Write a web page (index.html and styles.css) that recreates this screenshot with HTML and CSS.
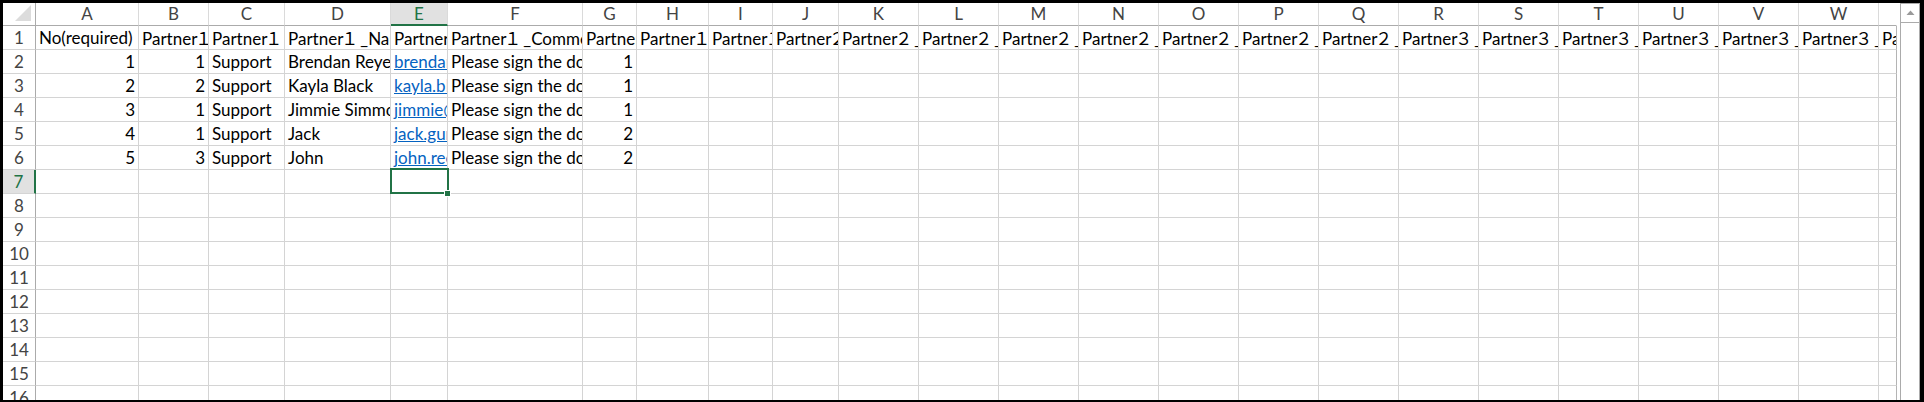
FILE: index.html
```html
<!DOCTYPE html>
<html lang="en">
<head>
<meta charset="utf-8">
<title>Sheet</title>
<link rel="stylesheet" href="styles.css">
</head>
<body>
<div class="window">
  <div class="sheet">
    <div class="row head">
      <div class="corner"><svg width="33" height="23" viewBox="0 0 33 23"><polygon points="28,2 28,18 12,18" fill="#dcdcdc"/></svg></div>
      <div>A</div><div>B</div><div>C</div><div>D</div><div class="on">E</div><div>F</div><div>G</div><div>H</div><div>I</div><div>J</div><div>K</div><div>L</div><div>M</div><div>N</div><div>O</div><div>P</div><div>Q</div><div>R</div><div>S</div><div>T</div><div>U</div><div>V</div><div>W</div><div class="x"></div>
    </div>
    <div class="row">
      <div class="rh">1</div>
      <div>No(required)</div><div>Partner<span class="fw">１</span>_Order</div><div>Partner<span class="fw">１</span>_Type</div><div>Partner<span class="fw">１</span>_Name</div><div>Partner<span class="fw">１</span>_Email</div><div>Partner<span class="fw">１</span>_Comment</div><div>Partner<span class="fw">１</span>_Language</div><div>Partner<span class="fw">１</span>_Company</div><div>Partner<span class="fw">１</span>_Phone</div>
      <div>Partner<span class="fw">２</span>_Order</div><div>Partner<span class="fw">２</span>_Type</div><div>Partner<span class="fw">２</span>_Name</div><div>Partner<span class="fw">２</span>_Email</div><div>Partner<span class="fw">２</span>_Comment</div><div>Partner<span class="fw">２</span>_Language</div><div>Partner<span class="fw">２</span>_Company</div><div>Partner<span class="fw">２</span>_Phone</div>
      <div>Partner<span class="fw">３</span>_Order</div><div>Partner<span class="fw">３</span>_Type</div><div>Partner<span class="fw">３</span>_Name</div><div>Partner<span class="fw">３</span>_Email</div><div>Partner<span class="fw">３</span>_Comment</div><div>Partner<span class="fw">３</span>_Language</div><div class="x">Partner<span class="fw">３</span>_Company</div>
    </div>
    <div class="row">
      <div class="rh">2</div>
      <div class="n">1</div><div class="n">1</div><div>Support</div><div>Brendan Reyes</div><div><a href="#">brendan.reyes@example.com</a></div><div>Please sign the document.</div><div class="n">1</div>
      <div></div><div></div><div></div><div></div>
      <div></div><div></div><div></div><div></div>
      <div></div><div></div><div></div><div></div>
      <div></div><div></div><div></div><div></div>
      <div class="x"></div>
    </div>
    <div class="row">
      <div class="rh">3</div>
      <div class="n">2</div><div class="n">2</div><div>Support</div><div>Kayla Black</div><div><a href="#">kayla.black@example.com</a></div><div>Please sign the document.</div><div class="n">1</div>
      <div></div><div></div><div></div><div></div>
      <div></div><div></div><div></div><div></div>
      <div></div><div></div><div></div><div></div>
      <div></div><div></div><div></div><div></div>
      <div class="x"></div>
    </div>
    <div class="row">
      <div class="rh">4</div>
      <div class="n">3</div><div class="n">1</div><div>Support</div><div>Jimmie Simmons</div><div><a href="#">jimmie@example.com</a></div><div>Please sign the document.</div><div class="n">1</div>
      <div></div><div></div><div></div><div></div>
      <div></div><div></div><div></div><div></div>
      <div></div><div></div><div></div><div></div>
      <div></div><div></div><div></div><div></div>
      <div class="x"></div>
    </div>
    <div class="row">
      <div class="rh">5</div>
      <div class="n">4</div><div class="n">1</div><div>Support</div><div>Jack</div><div><a href="#">jack.gunn@example.com</a></div><div>Please sign the document.</div><div class="n">2</div>
      <div></div><div></div><div></div><div></div>
      <div></div><div></div><div></div><div></div>
      <div></div><div></div><div></div><div></div>
      <div></div><div></div><div></div><div></div>
      <div class="x"></div>
    </div>
    <div class="row">
      <div class="rh">6</div>
      <div class="n">5</div><div class="n">3</div><div>Support</div><div>John</div><div><a href="#">john.reed@example.com</a></div><div>Please sign the document.</div><div class="n">2</div>
      <div></div><div></div><div></div><div></div>
      <div></div><div></div><div></div><div></div>
      <div></div><div></div><div></div><div></div>
      <div></div><div></div><div></div><div></div>
      <div class="x"></div>
    </div>
    <div class="row">
      <div class="rh on">7</div>
      <div></div><div></div><div></div><div></div>
      <div></div><div></div><div></div><div></div>
      <div></div><div></div><div></div><div></div>
      <div></div><div></div><div></div><div></div>
      <div></div><div></div><div></div><div></div>
      <div></div><div></div><div></div>
      <div class="x"></div>
    </div>
    <div class="row">
      <div class="rh">8</div>
      <div></div><div></div><div></div><div></div>
      <div></div><div></div><div></div><div></div>
      <div></div><div></div><div></div><div></div>
      <div></div><div></div><div></div><div></div>
      <div></div><div></div><div></div><div></div>
      <div></div><div></div><div></div>
      <div class="x"></div>
    </div>
    <div class="row">
      <div class="rh">9</div>
      <div></div><div></div><div></div><div></div>
      <div></div><div></div><div></div><div></div>
      <div></div><div></div><div></div><div></div>
      <div></div><div></div><div></div><div></div>
      <div></div><div></div><div></div><div></div>
      <div></div><div></div><div></div>
      <div class="x"></div>
    </div>
    <div class="row">
      <div class="rh">10</div>
      <div></div><div></div><div></div><div></div>
      <div></div><div></div><div></div><div></div>
      <div></div><div></div><div></div><div></div>
      <div></div><div></div><div></div><div></div>
      <div></div><div></div><div></div><div></div>
      <div></div><div></div><div></div>
      <div class="x"></div>
    </div>
    <div class="row">
      <div class="rh">11</div>
      <div></div><div></div><div></div><div></div>
      <div></div><div></div><div></div><div></div>
      <div></div><div></div><div></div><div></div>
      <div></div><div></div><div></div><div></div>
      <div></div><div></div><div></div><div></div>
      <div></div><div></div><div></div>
      <div class="x"></div>
    </div>
    <div class="row">
      <div class="rh">12</div>
      <div></div><div></div><div></div><div></div>
      <div></div><div></div><div></div><div></div>
      <div></div><div></div><div></div><div></div>
      <div></div><div></div><div></div><div></div>
      <div></div><div></div><div></div><div></div>
      <div></div><div></div><div></div>
      <div class="x"></div>
    </div>
    <div class="row">
      <div class="rh">13</div>
      <div></div><div></div><div></div><div></div>
      <div></div><div></div><div></div><div></div>
      <div></div><div></div><div></div><div></div>
      <div></div><div></div><div></div><div></div>
      <div></div><div></div><div></div><div></div>
      <div></div><div></div><div></div>
      <div class="x"></div>
    </div>
    <div class="row">
      <div class="rh">14</div>
      <div></div><div></div><div></div><div></div>
      <div></div><div></div><div></div><div></div>
      <div></div><div></div><div></div><div></div>
      <div></div><div></div><div></div><div></div>
      <div></div><div></div><div></div><div></div>
      <div></div><div></div><div></div>
      <div class="x"></div>
    </div>
    <div class="row">
      <div class="rh">15</div>
      <div></div><div></div><div></div><div></div>
      <div></div><div></div><div></div><div></div>
      <div></div><div></div><div></div><div></div>
      <div></div><div></div><div></div><div></div>
      <div></div><div></div><div></div><div></div>
      <div></div><div></div><div></div>
      <div class="x"></div>
    </div>
    <div class="row">
      <div class="rh">16</div>
      <div></div><div></div><div></div><div></div>
      <div></div><div></div><div></div><div></div>
      <div></div><div></div><div></div><div></div>
      <div></div><div></div><div></div><div></div>
      <div></div><div></div><div></div><div></div>
      <div></div><div></div><div></div>
      <div class="x"></div>
    </div>
    <div class="sel"><span class="handle"></span></div>
  </div>
  <div class="vscroll">
    <div class="up"><svg width="9" height="6" viewBox="0 0 9 6"><polygon points="4.5,0.5 8.5,5 0.5,5" fill="#9a9a9a"/></svg></div>
  </div>
</div>
</body>
</html>
```

FILE: styles.css
```css
* {
  box-sizing: border-box;
}

html,
body {
  margin: 0;
  padding: 0;
  background: #fff;
}

body {
  font-family: Lato, "Noto Sans CJK JP", sans-serif;
  font-size: 17px;
  color: #000;
}

.window {
  width: 1924px;
  height: 402px;
  border-style: solid;
  border-color: #000;
  border-width: 3px 4px 2px 3px;
  display: flex;
  overflow: hidden;
  background: #fff;
}

.sheet {
  position: relative;
  width: 1894px;
  flex: none;
}

.row {
  display: grid;
  grid-template-columns: 33px 103px 70px 76px 106px 57px 135px 54px 72px 64px 66px repeat(13, 80px) 18px;
  height: 24px;
}

.row > div {
  border-right: 1px solid #d4d4d4;
  border-bottom: 1px solid #d4d4d4;
  overflow: hidden;
  white-space: nowrap;
  padding: 0 3px;
  line-height: 23px;
}

.fw {
  font-family: "Noto Sans CJK JP", sans-serif;
  margin-left: -2px;
  margin-right: 2px;
}

.row > .n {
  text-align: right;
}

.row > .x {
  border-right-color: #b4b4b4;
}

.row > .rh {
  padding: 0;
  text-align: center;
  color: #444;
  border-right-color: #ababab;
}

.row > .rh.on {
  background: #e1e1e1;
  color: #217346;
  border-right: 2px solid #217346;
}

.head {
  height: 23px;
}

.head > div {
  padding: 0;
  text-align: center;
  color: #444;
  line-height: 22px;
  border-right-color: #dadada;
  border-bottom-color: #ababab;
}

.head > .corner {
  border-right-color: #ababab;
}

.corner svg {
  display: block;
}

.head > .on {
  background: #e1e1e1;
  color: #217346;
  border-bottom: 2px solid #217346;
  line-height: 21px;
}

.head > .x {
  border-right-color: #fff;
}

a {
  color: #0563c1;
  text-decoration: underline;
}

.sel {
  position: absolute;
  left: 387px;
  top: 165px;
  width: 59px;
  height: 26px;
  border: 2px solid #217346;
}

.handle {
  position: absolute;
  right: -3px;
  bottom: -4px;
  width: 5px;
  height: 5px;
  background: #217346;
  box-shadow: 0 0 0 1px #fff;
}

.vscroll {
  margin-left: 3px;
  width: 20px;
  flex: none;
  border: 1px solid #ababab;
  border-bottom: none;
  background: #fff;
}

.up {
  height: 19px;
  border-bottom: 1px solid #ababab;
  display: flex;
  align-items: center;
  justify-content: center;
}

.up svg {
  display: block;
}
```
